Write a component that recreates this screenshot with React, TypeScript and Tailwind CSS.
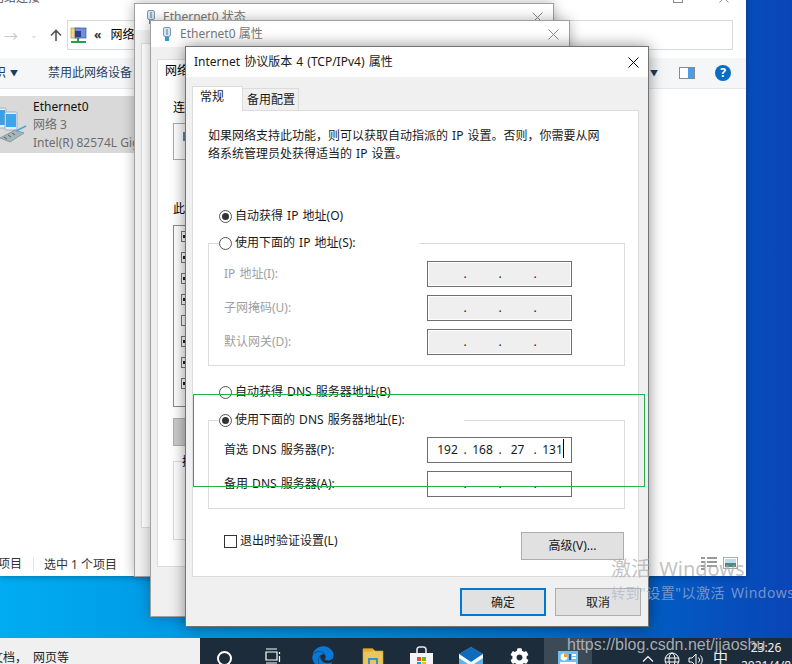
import React from "react";
import { FaEdge, FaCog } from "react-icons/fa";

const Close = ({ c = "#000", s = 11 }: { c?: string; s?: number }) => (
  <svg width={s} height={s} viewBox="0 0 11 11"><path d="M.5.5l10 10M10.5.5l-10 10" stroke={c} strokeWidth="1" fill="none" /></svg>
);

const NicIcon = () => (
  <svg className="shrink-0" width="10" height="15" viewBox="0 0 10 15">
    <rect x="1.5" y="0.5" width="7" height="9" rx="1.5" fill="#d7e3ee" stroke="#7f98ad" />
    <rect x="4" y="2" width="2" height="6" fill="#8fb0ca" />
    <rect x="3" y="10" width="4" height="4" fill="#2b9bd8" />
  </svg>
);

const Radio = ({ on }: { on?: boolean }) => (
  <span className="w-[13px] h-[13px] rounded-full border border-[#555] bg-white flex items-center justify-center shrink-0">
    {on && <span className="w-[7px] h-[7px] rounded-full bg-[#333]" />}
  </span>
);

const RadioRow = ({ on, label }: { on?: boolean; label: string }) => (
  <div className="flex items-center h-[18px]">
    <Radio on={on} />
    <span className="ml-[3px] -mt-[1px] text-[12px] leading-[18px] whitespace-pre bg-white">{label}</span>
  </div>
);

const IpField = ({ values, disabled }: { values?: string[]; disabled?: boolean }) => {
  const v = values ?? ["", "", "", ""];
  return (
    <div className={`relative w-[145px] h-[26px] border border-[#6f6f6f] flex items-center pl-[4px] ${disabled ? "bg-[#efefef] outline outline-1 -outline-offset-2 outline-white" : "bg-white"}`}>
      {v.map((t, i) => (
        <React.Fragment key={i}>
          <span className="w-[31px] text-center text-[12px] leading-[18px]">{t}</span>
          {i < 3 && <span className="w-[4px] text-center text-[12px] leading-[18px]">.</span>}
        </React.Fragment>
      ))}
    </div>
  );
};

const FieldRow = ({ label, values, disabled, caret }: { label: string; values?: string[]; disabled?: boolean; caret?: boolean }) => (
  <div className="flex items-center h-[26px]">
    <span className={`w-[203px] text-[12px] leading-[18px] ${disabled ? "text-[#a0a0a0]" : ""}`}>{label}</span>
    <div className="relative">
      <IpField values={values} disabled={disabled} />
      {caret && <span className="absolute left-[136px] top-[2px] w-px h-[19px] bg-black" />}
    </div>
  </div>
);

const Btn = ({ label, primary }: { label: string; primary?: boolean }) => (
  <div className={`w-[86px] h-[28px] pt-[2px] flex items-center justify-center text-[12px] bg-[#e1e1e1] ${primary ? "border-2 border-[#0078d7]" : "border border-[#adadad]"}`}>{label}</div>
);

const AddressIcon = () => (
  <svg className="shrink-0" width="17" height="17" viewBox="0 0 17 17">
    <rect x="1" y="1" width="9" height="10" fill="#f3d97a" stroke="#b79a3a" strokeWidth=".7" />
    <rect x="5" y="1" width="11" height="10" fill="#6f8fd8" stroke="#3c56a0" strokeWidth=".7" />
    <rect x="5" y="4" width="6" height="6" fill="#2e3f8f" />
    <rect x="7" y="11" width="2" height="3" fill="#1fa34a" />
    <rect x="1" y="14" width="15" height="2" fill="#1fa34a" />
  </svg>
);

const NetIcon = () => (
  <svg className="shrink-0" width="27" height="36" viewBox="0 0 27 36">
    <rect x="-6" y="1" width="12" height="20" rx="1" fill="#e5eef6" stroke="#9fb2c2" />
    <rect x="-5" y="3" width="10" height="15" fill="#3b9ee8" />
    <rect x="5" y="5" width="12" height="18" rx="1" fill="#e5eef6" stroke="#9fb2c2" />
    <rect x="6" y="7" width="10" height="13" fill="#3ba6ef" />
    <path d="M0 31l15-8 9 3-14 9z" fill="#a8b5b8" stroke="#6d7f85" strokeWidth=".6" />
    <path d="M4 30l3 2M8 28l3 2M12 26l3 2" stroke="#4f6268" strokeWidth="1" />
    <path d="M16 24l10-5" stroke="#4aa6d8" strokeWidth="1.4" />
  </svg>
);

const Store = () => (
  <svg width="23" height="24" viewBox="0 0 23 24">
    <path d="M7 7V3.5a2.5 2.5 0 0 1 2.5-2.5h4A2.5 2.5 0 0 1 16 3.5V7" stroke="#e8e8e8" strokeWidth="1.6" fill="none" />
    <rect x="0" y="7" width="23" height="17" fill="#f4f4f4" />
    <rect x="7" y="11" width="4" height="4" fill="#f25022" />
    <rect x="12" y="11" width="4" height="4" fill="#7fba00" />
    <rect x="7" y="16" width="4" height="4" fill="#00a4ef" />
    <rect x="12" y="16" width="4" height="4" fill="#ffb900" />
  </svg>
);

const Mail = () => (
  <svg width="24" height="22" viewBox="0 0 24 22">
    <path d="M0 7L12 0l12 7v15H0z" fill="#5ab4e8" />
    <path d="M0 7L12 0l12 7-12 8z" fill="#0f6cbd" />
    <path d="M0 7l12 8 12-8v4l-12 8L0 11z" fill="#f2f8fc" />
  </svg>
);

const Folder = () => (
  <svg width="22" height="22" viewBox="0 0 22 22">
    <path d="M1 1h10l2 2h8v19H1z" fill="#e8c660" stroke="#c9a53c" strokeWidth=".6" />
    <rect x="1" y="0.5" width="10" height="3" fill="#f0a91e" />
    <rect x="6" y="10" width="10" height="8" fill="#3a8fd0" />
    <rect x="8" y="12" width="6" height="4" fill="#e8c660" />
  </svg>
);

const TaskApp = () => (
  <svg width="20" height="20" viewBox="0 0 20 20">
    <rect width="20" height="20" fill="#6fc0ee" />
    <circle cx="6" cy="6" r="3.4" fill="#fff" />
    <path d="M6 6V2.6A3.4 3.4 0 0 1 9.4 6z" fill="#e8a030" />
    <rect x="11" y="3" width="2" height="6" fill="#2a5ea8" />
    <rect x="14" y="3" width="4" height="2" fill="#fff" />
    <rect x="14" y="6" width="4" height="2" fill="#fff" />
    <rect x="2" y="11" width="16" height="2" fill="#fff" />
  </svg>
);

const Help = () => (
  <span className="w-[16px] h-[16px] rounded-full bg-[#0a6cc4] text-white text-[12px] font-bold flex items-center justify-center leading-none">?</span>
);

const Explorer = () => (
  <div className="absolute left-0 -top-[10px] w-[746px] h-[586px] bg-white flex flex-col shadow-[0_1px_6px_rgba(0,0,0,0.3)] text-[12px]">
    <div className="h-[16px] shrink-0 flex justify-between pr-[17px] text-[12px] text-[#555]">
      <span className="-ml-[8px] -mt-[1px] leading-[18px]">网络连接</span>
      <div className="flex items-center gap-[36px]">
        <span className="w-[10px] h-[10px] border border-[#888] bg-white" />
        <Close c="#888" s={10} />
      </div>
    </div>
    <div className="h-[30px] mt-[14px] shrink-0 flex items-center pr-[13px]">
      <span className="w-[20px] ml-[1px] text-[#c8c8c8] text-[14px] text-center">→</span>
      <span className="w-[20px] ml-[3px] text-[#d0d0d0] text-[9px] text-center">⌄</span>
      <svg className="ml-[6px] shrink-0" width="12" height="13" viewBox="0 0 12 13"><path d="M6 12V1.5M1 6.5l5-5 5 5" stroke="#555" strokeWidth="1.6" fill="none" /></svg>
      <div className="ml-[5px] flex-1 h-[30px] border border-[#d9d9d9] flex items-center pl-[2px]">
        <AddressIcon />
        <span className="ml-[7px] text-[12px] font-bold text-[#333]">«</span>
        <span className="ml-[9px]">网络连接</span>
      </div>
    </div>
    <div className="h-[31px] mt-[8px] shrink-0 bg-[#f5f6f7] border-b border-[#e6e6e6] flex items-center text-[#1f3a5f]">
      <span className="-ml-[18px]">组织</span>
      <span className="ml-[4px] text-[8px] text-[#1f3a5f]">▼</span>
      <span className="ml-[30px] text-[#2a3f5a]">禁用此网络设备</span>
      <span className="ml-auto text-[8px] text-[#1f3a5f]">▼</span>
      <span className="ml-[21px] w-[16px] h-[12px] border border-[#8a8a8a] bg-white flex justify-end">
        <span className="w-[6px] h-full bg-[#4a9be8]" />
      </span>
      <span className="ml-[20px] mr-[15px]"><Help /></span>
    </div>
    <div className="mt-[7px] h-[57px] w-[134px] bg-[#d9d9d9] flex items-center overflow-hidden shrink-0">
      <NetIcon />
      <div className="ml-[6px] whitespace-nowrap leading-[18px]">
        <div className="text-[#111]">Ethernet0</div>
        <div className="text-[#6d6d6d]">网络 3</div>
        <div className="text-[#6d6d6d]">Intel(R) 82574L Gigabit</div>
      </div>
    </div>
    <div className="flex-1" />
    <div className="h-[24px] shrink-0 flex items-center text-[#333] whitespace-nowrap">
      <span className="-ml-[24px] pr-[11px] border-r border-[#e3e3e3] leading-[14px]">1 个项目</span>
      <span className="ml-[10px] mt-[1px]">选中 1 个项目</span>
      <span className="ml-auto mr-[8px] flex items-center gap-[6px] -mt-[2px]">
        <svg width="16" height="13" viewBox="0 0 16 13"><path d="M0 1h4M0 5h4M0 9h4M0 12h4M6 1h10M6 5h10M6 9h10" stroke="#777" strokeWidth="1.4" /></svg>
        <svg width="15" height="12" viewBox="0 0 15 12"><rect x=".5" y=".5" width="14" height="11" fill="#fff" stroke="#aab" /><path d="M2 2h11v4H2z" fill="#bfdcee" /><path d="M2 6h11v4H2z" fill="#4d8b7a" /></svg>
      </span>
    </div>
  </div>
);

const StatusWin = () => (
  <div className="absolute left-[134px] top-[3px] w-[420px] h-[574px] bg-[#f0f0f0] border border-[#a0a0a0] shadow-[0_0_12px_rgba(0,0,0,0.3)] flex flex-col">
    <div className="h-[26px] bg-white shrink-0 flex items-center pl-[11px] pr-[10px] text-[12px] text-[#777]">
      <NicIcon />
      <span className="ml-[7px]">Ethernet0 状态</span>
      <span className="ml-auto"><Close c="#888" /></span>
    </div>
    <div className="mx-[6px] mt-[13px] h-[485px] bg-white border border-[#dcdcdc]" />
  </div>
);

const PropWin = () => (
  <div className="absolute left-[150px] top-[20px] w-[420px] h-[597px] bg-[#f0f0f0] border border-[#a0a0a0] shadow-[0_0_12px_rgba(0,0,0,0.3)] flex flex-col text-[12px]">
    <div className="h-[26px] bg-white shrink-0 flex items-center pl-[11px] pr-[10px] text-[#777]">
      <NicIcon />
      <span className="ml-[8px]">Ethernet0 属性</span>
      <span className="ml-auto"><Close c="#888" /></span>
    </div>
    <div className="ml-[6px] mt-[12px] w-[60px] h-[24px] bg-white border border-[#dcdcdc] border-b-0 pl-[7px] leading-[22px] -mb-px relative">网络</div>
    <div className="mx-[6px] flex-1 mb-[49px] bg-white border border-[#dcdcdc] pl-[15px] flex flex-col">
      <div className="mt-[16px] leading-[18px]">连接时使用</div>
      <div className="mt-[6px] w-[40px] h-[37px] border border-[#aaa] pl-[9px] pt-[8px]">
        <span className="block w-[4px] h-[9px] bg-[#5f87a8]" />
      </div>
      <div className="mt-[40px] leading-[18px]">此连接使用下列项目</div>
      <div className="mt-[7px] w-[40px] h-[182px] border border-[#888] flex flex-col pl-[7px] pt-[5px] gap-[10px]">
        {[1, 1, 1, 1, 0, 1, 1, 1].map((c, i) => (
          <span key={i} className="w-[11px] h-[11px] border border-[#777] flex items-center pl-[1px] shrink-0">
            {c ? <span className="block w-[3px] h-[3px] bg-[#222]" /> : null}
          </span>
        ))}
      </div>
      <div className="mt-[11px] w-[40px] h-[28px] bg-[#cccccc] border border-[#adadad]" />
      <div className="mt-[15px] w-[40px] h-[79px] border border-[#dcdcdc] pl-[8px]"><span className="bg-white relative -top-[9px]">描述</span></div>
    </div>
  </div>
);

const Dialog = () => (
  <div className="absolute left-[185px] top-[46px] w-[464px] h-[581px] bg-[#f0f0f0] border border-[#6f7478] shadow-[0_0_14px_rgba(0,0,0,0.45)] flex flex-col text-[12px] text-[#1a1a1a] [word-spacing:1px]">
    <div className="h-[30px] bg-white shrink-0 flex items-center pl-[8px] pr-[9px]">
      <span className="text-[12px]">Internet 协议版本 4 (TCP/IPv4) 属性</span>
      <span className="ml-auto"><Close /></span>
    </div>
    <div className="flex items-end mt-[9px] ml-[6px] h-[25px] -mb-px relative shrink-0">
      <div className="w-[51px] h-[25px] bg-white border border-[#dcdcdc] border-b-0 pl-[7px] leading-[20px]">常规</div>
      <div className="w-[56px] h-[23px] bg-[#f0f0f0] border border-l-0 border-[#dcdcdc] pl-[4px] leading-[21px]">备用配置</div>
    </div>
    <div className="ml-[6px] w-[447px] h-[467px] bg-white border border-[#dcdcdc] pl-[15px] pt-[16px] shrink-0">
      <p className="leading-[18px] w-[400px]">如果网络支持此功能，则可以获取自动指派的 IP 设置。否则，你需要从网络系统管理员处获得适当的 IP 设置。</p>
      <div className="mt-[44px] ml-[11px]"><RadioRow on label="自动获得 IP 地址(O)" /></div>
      <div className="relative mt-[18px] w-[417px] h-[123px] border border-[#dcdcdc] pl-[15px] pt-[17px] flex flex-col gap-[8px]">
        <div className="absolute left-[10px] -top-[10px] bg-white pr-[63px]"><RadioRow label="使用下面的 IP 地址(S):" /></div>
        <FieldRow label="IP 地址(I):" disabled />
        <FieldRow label="子网掩码(U):" disabled />
        <FieldRow label="默认网关(D):" disabled />
      </div>
      <div className="mt-[17px] ml-[11px]"><RadioRow label="自动获得 DNS 服务器地址(B)" /></div>
      <div className="relative mt-[19px] w-[417px] h-[89px] border border-[#dcdcdc] pl-[15px] pt-[16px] flex flex-col gap-[8px]">
        <div className="absolute left-[10px] -top-[10px] bg-white pr-[59px]"><RadioRow on label="使用下面的 DNS 服务器地址(E):" /></div>
        <FieldRow label="首选 DNS 服务器(P):" values={["192", "168", "27", "131"]} caret />
        <FieldRow label="备用 DNS 服务器(A):" />
      </div>
      <div className="flex justify-between items-start mt-[23px] w-[416px] pl-[16px]">
        <div className="flex items-center mt-[2px]">
          <span className="w-[13px] h-[13px] border border-[#333] bg-white" />
          <span className="ml-[3px] leading-[14px]">退出时验证设置(L)</span>
        </div>
        <div className="w-[103px] h-[28px] bg-[#e1e1e1] border border-[#adadad] flex items-center justify-center">高级(V)...</div>
      </div>
    </div>
    <div className="flex justify-end gap-[9px] pr-[7px] pt-[11px]">
      <Btn label="确定" primary />
      <Btn label="取消" />
    </div>
  </div>
);

const Taskbar = () => (
  <div className="absolute left-0 top-[638px] w-[792px] h-[40px] bg-[#1d2c3b] flex items-start text-white">
    <div className="w-[200px] shrink-0 h-full bg-[#f0f0f0] text-[#222] text-[12px] leading-[18px] pt-[11px] whitespace-nowrap overflow-hidden"><span className="-ml-[9px] inline-block">文档，</span><span className="ml-[6px]">网页等</span></div>
    <div className="w-[49px] shrink-0 h-full flex justify-center pt-[13px]"><span className="w-[15px] h-[15px] rounded-full border-2 border-white" /></div>
    <div className="w-[47px] shrink-0 h-full flex justify-center pt-[10px]">
      <svg width="16" height="16" viewBox="0 0 16 16"><path d="M1 1h11M1 4h11v8H1zM1 15h11M14.5 4v2M14.5 8v6" stroke="#fff" strokeWidth="1.2" fill="none" /></svg>
    </div>
    <div className="w-[53px] shrink-0 h-full flex justify-center pt-[8px]"><FaEdge size={22} color="#0a78d4" /></div>
    <div className="w-[47px] shrink-0 h-full flex justify-center pt-[10px]"><Folder /></div>
    <div className="w-[50px] shrink-0 h-full flex justify-center pt-[8px]"><Store /></div>
    <div className="w-[49px] shrink-0 h-full flex justify-center pt-[9px]"><Mail /></div>
    <div className="w-[49px] shrink-0 h-full flex justify-center pt-[10px]"><FaCog size={19} color="#fff" /></div>
    <div className="w-[48px] shrink-0 h-full bg-[#3c4a58] flex justify-center pt-[13px]"><TaskApp /></div>
    <div className="ml-[50px] shrink-0 flex items-start gap-[8px] pt-[14px] text-[#eee]">
      <svg className="mt-[3px]" width="12" height="7" viewBox="0 0 12 7"><path d="M1 6.5l5-5 5 5" stroke="#fff" strokeWidth="1.1" fill="none" /></svg>
      <svg className="ml-[2px]" width="16" height="16" viewBox="0 0 16 16"><circle cx="8" cy="8" r="7" stroke="#fff" fill="none" /><ellipse cx="8" cy="8" rx="3" ry="7" stroke="#fff" fill="none" /><path d="M1 6h14M1 10h14" stroke="#fff" /></svg>
      <svg width="16" height="16" viewBox="0 0 16 16"><path d="M1 6h3l4-4v12l-4-4H1z" stroke="#fff" fill="none" /><path d="M10.5 5.5a3.5 3.5 0 0 1 0 5M12.5 3.5a6.5 6.5 0 0 1 0 9" stroke="#fff" fill="none" /></svg>
      <span className="text-[15px] leading-[16px] ml-[1px] -mt-[3px]">中</span>
    </div>
    <div className="ml-[8px] w-[60px] shrink-0 text-center text-[12px] leading-[16px] pt-[2px] whitespace-nowrap text-[#eee]">
      <div>23:26</div>
      <div className="mt-[2px]">2021/4/8</div>
    </div>
  </div>
);

export default function App() {
  return (
    <div className="relative w-[792px] h-[664px] overflow-hidden bg-gradient-to-r from-[#00acf2] via-[#0083d6] to-[#0a45b8] [font-family:'Noto_Sans','Noto_Sans_CJK_SC',sans-serif]">
      <Explorer />
      <StatusWin />
      <PropWin />
      <Dialog />
      <Taskbar />
      <div className="absolute left-[611px] top-[556px] text-[20px] leading-[26px] text-[#a8a8a8]/70 whitespace-nowrap [word-spacing:3px]">激活 Windows</div>
      <div className="absolute left-[611px] top-[583px] text-[14px] leading-[20px] tracking-[0.5px] [word-spacing:2px] text-[#a8b4cc]/70 whitespace-nowrap">转到"设置"以激活 Windows。</div>
      <div className="absolute left-[567px] top-[635px] text-[16px] leading-[20px] text-[#b8bcc2]/90 whitespace-nowrap [font-family:'Liberation_Sans',sans-serif]">https://blog.csdn.net/jiaoshu</div>
      <div className="absolute left-[193px] top-[394px] w-[452px] h-[93px] border border-[#22b14c]" />
    </div>
  );
}
